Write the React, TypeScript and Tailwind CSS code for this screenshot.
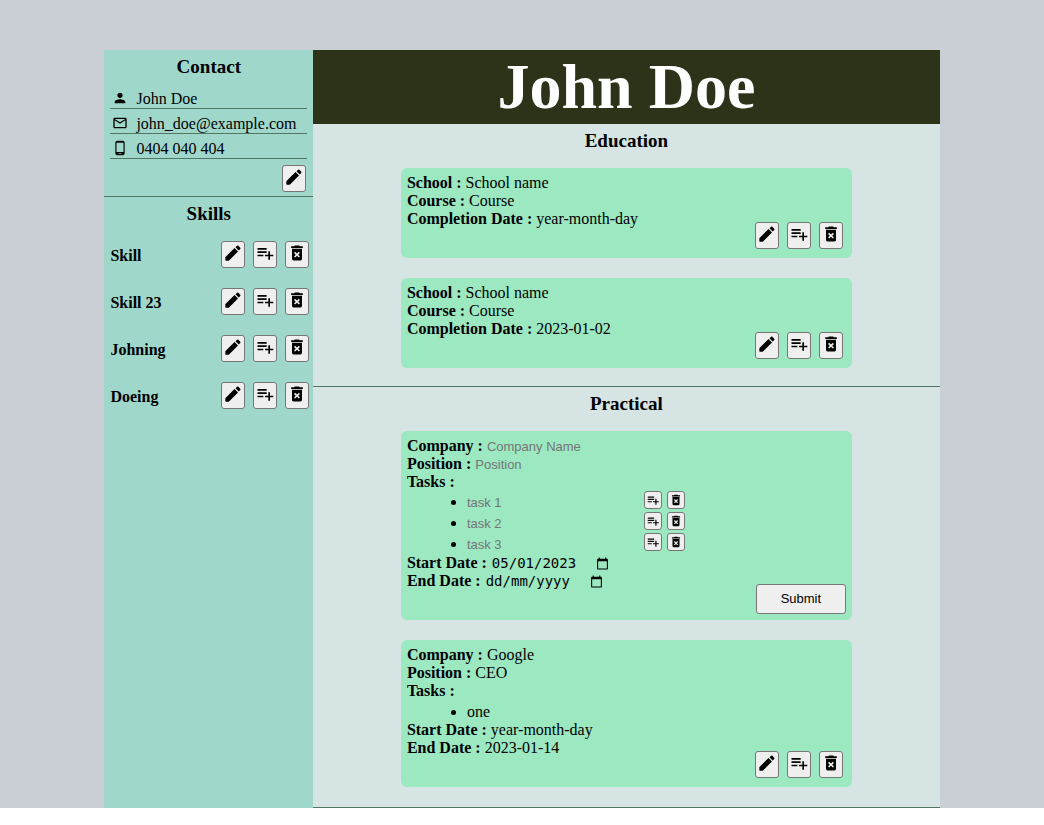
import type { ReactNode } from "react";
import {
  MdCalendarToday,
  MdDeleteForever,
  MdMailOutline,
  MdPerson,
  MdPhoneAndroid,
  MdPlaylistAdd,
} from "react-icons/md";

const BUTTON =
  "flex shrink-0 justify-center rounded-[3px] border border-[#767676] bg-[#efefef] text-black";
const ACTION = `${BUTTON} h-[27px] w-6 items-start pt-px`;
const SMALL_ACTION = `${BUTTON} size-[18px] items-center`;

function PencilIcon() {
  return (
    <svg viewBox="0 0 24 24" className="size-5" fill="currentColor" aria-hidden="true">
      <path d="M2.8 17.3v3.2c0 .4.3.7.7.7h3.2c.2 0 .4-.1.5-.2L18 10.2l-4.2-4.2L3 16.8c-.1.1-.2.3-.2.5z" />
      <path d="M20.7 5.6l-2.3-2.3c-.4-.4-1-.4-1.4 0l-2 1.9 3.8 3.8 1.9-1.9c.4-.4.4-1.1 0-1.5z" />
    </svg>
  );
}

function EditButton({ label }: { label: string }) {
  return (
    <button type="button" aria-label={`Edit ${label}`} className={ACTION}>
      <PencilIcon />
    </button>
  );
}

function Actions({ label }: { label: string }) {
  return (
    <div className="flex shrink-0 gap-2">
      <EditButton label={label} />
      <button type="button" aria-label={`Add after ${label}`} className={ACTION}>
        <MdPlaylistAdd size={20} />
      </button>
      <button type="button" aria-label={`Delete ${label}`} className={ACTION}>
        <MdDeleteForever size={20} />
      </button>
    </div>
  );
}

function Heading({ children }: { children: ReactNode }) {
  return (
    <h2 className="h-[34px] pt-1.5 text-center text-[19px] leading-[22px] font-bold">
      {children}
    </h2>
  );
}

function ContactRow({ icon, children }: { icon: ReactNode; children: ReactNode }) {
  return (
    <li className="flex h-[25px] items-end border-b border-[#517664]">
      <span className="flex w-[26px] pb-0.5 pl-0.5">{icon}</span>
      <span>{children}</span>
    </li>
  );
}

function Card({ children, footer }: { children: ReactNode; footer: ReactNode }) {
  return (
    <article className="mx-auto my-2.5 flex w-[72%] rounded-md bg-[#9ce8c1] p-1.5">
      <div className="min-w-0 flex-1 pb-6">{children}</div>
      <div className="self-end">{footer}</div>
    </article>
  );
}

function Field({ label, children }: { label: string; children?: ReactNode }) {
  return (
    <p className="h-[18px]">
      <b>{label} :</b> {children}
    </p>
  );
}

function InputField({ id, label, placeholder }: { id: string; label: string; placeholder: string }) {
  return (
    <div className="flex h-[18px] items-baseline gap-1">
      <label htmlFor={id} className="font-bold">
        {label} :
      </label>
      <input
        id={id}
        placeholder={placeholder}
        className="h-[18px] w-[177px] font-['Liberation_Sans',sans-serif] text-[13px] placeholder:text-[#757575]"
      />
    </div>
  );
}

function DateField({ id, label, value }: { id: string; label: string; value?: string }) {
  return (
    <div className="flex h-[18px] items-baseline gap-1">
      <label htmlFor={id} className="font-bold">
        {label} :
      </label>
      <span className="flex h-[18px] items-center">
        <input
          id={id}
          defaultValue={value}
          placeholder="dd/mm/yyyy"
          className="h-[18px] w-[105px] pl-px font-['DejaVu_Sans_Mono',monospace] text-[14px] placeholder:text-black"
        />
        <button type="button" aria-label={`Pick ${label}`}>
          <MdCalendarToday size={13} />
        </button>
      </span>
    </div>
  );
}

const skills = ["Skill", "Skill 23", "Johning", "Doeing"];
const schools = [
  { name: "School name", course: "Course", date: "year-month-day" },
  { name: "School name", course: "Course", date: "2023-01-02" },
];
const tasks = ["task 1", "task 2", "task 3"];

export default function App() {
  return (
    <div className="bg-[#cacfd6] pt-[50px] font-['Liberation_Serif',serif] text-[16px] leading-[18px] text-black">
      <div className="mx-auto flex w-4/5">
        <aside className="w-1/4 bg-[#9fd8cb]">
          <section className="border-b border-[#517664] pb-1">
            <Heading>Contact</Heading>
            <ul className="mx-1.5">
              <ContactRow icon={<MdPerson size={16} />}>John Doe</ContactRow>
              <ContactRow icon={<MdMailOutline size={16} />}>john_doe@example.com</ContactRow>
              <ContactRow icon={<MdPhoneAndroid size={16} />}>0404 040 404</ContactRow>
            </ul>
            <div className="flex justify-end pt-1.5 pr-[7px]">
              <EditButton label="contact" />
            </div>
          </section>
          <section>
            <Heading>Skills</Heading>
            <ul>
              {skills.map((skill) => (
                <li key={skill} className="flex items-center justify-between py-2.5 pr-1 pl-1.5">
                  <b className="pt-0.5">{skill}</b>
                  <Actions label={skill} />
                </li>
              ))}
            </ul>
          </section>
        </aside>

        <main className="w-3/4 bg-[#d6e5e3]">
          <h1 className="bg-[#2d3319] text-center text-[64px] leading-[74px] font-bold text-white">
            John Doe
          </h1>

          <section className="flow-root border-b border-[#517664] pb-2">
            <Heading>Education</Heading>
            <div className="flex flex-col">
              {schools.map((school) => (
                <Card
                  key={school.date}
                  footer={
                    <div className="m-[3px]">
                      <Actions label="school" />
                    </div>
                  }
                >
                  <Field label="School">{school.name}</Field>
                  <Field label="Course">{school.course}</Field>
                  <Field label="Completion Date">{school.date}</Field>
                </Card>
              ))}
            </div>
          </section>

          <section className="border-b border-[#517664] pb-2.5">
            <Heading>Practical</Heading>
            <div className="flex flex-col">
              <Card
                footer={
                  <button
                    type="submit"
                    className="h-[30px] w-[90px] rounded-[3px] border border-[#767676] bg-[#efefef] font-['Liberation_Sans',sans-serif] text-[13px]"
                  >
                    Submit
                  </button>
                }
              >
                <InputField id="company" label="Company" placeholder="Company Name" />
                <InputField id="position" label="Position" placeholder="Position" />
                <Field label="Tasks" />
                <ul className="list-disc pl-[60px]">
                  {tasks.map((task) => (
                    <li key={task} className="h-[21px]">
                      <div className="flex">
                        <input
                          aria-label={task}
                          placeholder={task}
                          className="mt-[3px] h-[18px] w-[177px] font-['Liberation_Sans',sans-serif] text-[13px] placeholder:text-[#757575]"
                        />
                        <div className="flex gap-[5px]">
                          <button type="button" aria-label={`Add after ${task}`} className={SMALL_ACTION}>
                            <MdPlaylistAdd size={14} />
                          </button>
                          <button type="button" aria-label={`Delete ${task}`} className={SMALL_ACTION}>
                            <MdDeleteForever size={14} />
                          </button>
                        </div>
                      </div>
                    </li>
                  ))}
                </ul>
                <DateField id="start" label="Start Date" value="05/01/2023" />
                <DateField id="end" label="End Date" />
              </Card>

              <Card
                footer={
                  <div className="m-[3px]">
                    <Actions label="Google" />
                  </div>
                }
              >
                <Field label="Company">Google</Field>
                <Field label="Position">CEO</Field>
                <Field label="Tasks" />
                <ul className="list-disc pl-[60px]">
                  <li className="pt-[3px]">one</li>
                </ul>
                <Field label="Start Date">year-month-day</Field>
                <Field label="End Date">2023-01-14</Field>
              </Card>
            </div>
          </section>
        </main>
      </div>
    </div>
  );
}
